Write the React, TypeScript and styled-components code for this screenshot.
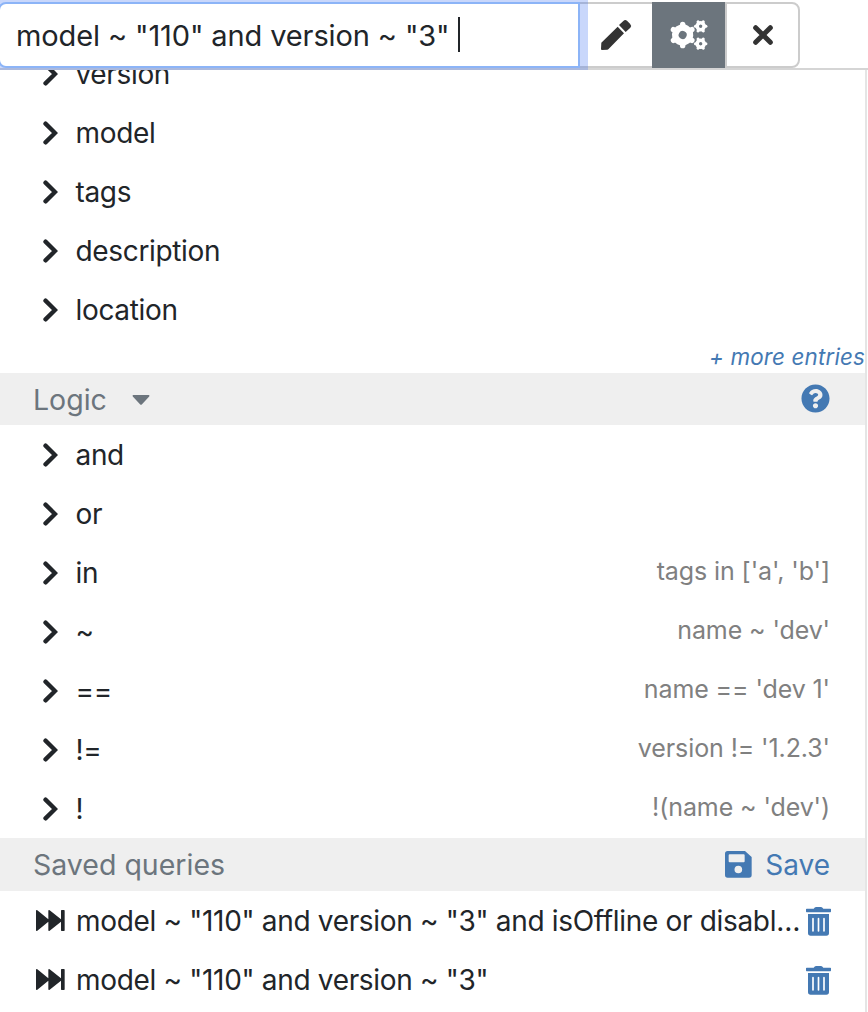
import React from "react";
import styled, { createGlobalStyle } from "styled-components";
import { FaQuestionCircle } from "react-icons/fa";

const GlobalStyle = createGlobalStyle`
  * { box-sizing: border-box; }
  body {
    margin: 0;
    background: #fff;
    color: #212529;
    font-family: Inter, "Liberation Sans", sans-serif;
    font-size: 28px;
    font-feature-settings: "calt" 0;
  }
  svg { display: block; flex: none; }
`;

const Page = styled.main`
  width: 868px;
  height: 1012px;
  overflow: hidden;
  display: flex;
  flex-direction: column;
`;

const Toolbar = styled.header`
  flex: none;
  height: 70px;
  padding-top: 2px;
  display: flex;
  align-items: flex-start;
  border-bottom: 2px solid #d5d5d5;
`;

const QueryField = styled.div`
  position: relative;
  z-index: 1;
  width: 582px;
  height: 66px;
  margin-left: -2px;
  padding: 1px 0 0 16px;
  display: flex;
  align-items: center;
  white-space: pre;
  font-size: 29px;
  letter-spacing: -0.12px;
  background: #fff;
  border: 2px solid #8cb4f7;
  border-radius: 8px 0 0 8px;
  box-shadow: 0 0 0 8px rgba(77, 124, 243, 0.3);
`;

const Caret = styled.span`
  width: 2px;
  height: 35px;
  margin-bottom: 2px;
  background: #212529;
`;

const ToolButton = styled.button<{ $width: number; $active?: boolean; $last?: boolean }>`
  width: ${(p) => p.$width}px;
  height: 66px;
  padding: 0;
  display: flex;
  align-items: center;
  justify-content: center;
  color: ${(p) => (p.$active ? "#fff" : "#333")};
  background: ${(p) => (p.$active ? "#6c757d" : "#fff")};
  border: 2px solid ${(p) => (p.$active ? "#6c757d" : "#ccc")};
  border-left-width: ${(p) => (p.$last ? 2 : 0)}px;
  border-right-width: ${(p) => (p.$last ? 2 : 0)}px;
  border-radius: ${(p) => (p.$last ? "0 8px 8px 0" : "0")};
`;

const Panel = styled.section`
  position: relative;
  z-index: 2;
  width: 867px;
  flex: 1;
  min-height: 0;
  overflow: hidden;
  background: #fff;
  border-right: 2px solid #e5e5e5;
`;

const ScrolledList = styled.div`
  margin-top: -26px;
`;

const Row = styled.div`
  height: 59px;
  padding: 0 35px 0 43px;
  display: flex;
  align-items: center;
`;

const Label = styled.span`
  margin-left: 17.500px;
  line-height: 34px;
  letter-spacing: -0.34px;
`;

const Hint = styled.span`
  margin-left: auto;
  padding-bottom: 3px;
  color: #808080;
  font-size: 25px;
  line-height: 30px;
  letter-spacing: -0.1px;
`;

const MoreEntries = styled.a`
  display: block;
  height: 34px;
  color: #4479b3;
  font-size: 22.4px;
  font-style: italic;
  line-height: 35px;
  letter-spacing: 0.15px;
  text-align: right;
`;

const SectionHeader = styled.div<{ $height: number }>`
  height: ${(p) => p.$height}px;
  padding: 0 35px 0 33px;
  display: flex;
  align-items: center;
  justify-content: space-between;
  color: #6c757d;
  background: #efefef;
`;

const Title = styled.span`
  display: flex;
  align-items: center;
  gap: 25px;
  font-size: 28.500px;

  svg { margin-top: 2px; }
`;

const SaveLink = styled.a`
  display: flex;
  align-items: center;
  gap: 13px;
  color: #4479b3;
`;

const HelpIcon = styled(FaQuestionCircle)`
  margin-bottom: 1px;
  color: #4479b3;
`;

const SavedRow = styled.div`
  height: 59px;
  padding: 0 34px 0 36px;
  display: flex;
  align-items: center;
`;

const SavedText = styled.span`
  width: 725px;
  margin: 0 5px 0 11px;
  padding-top: 1px;
  overflow: hidden;
  white-space: nowrap;
  text-overflow: ellipsis;
  letter-spacing: -0.32px;
`;

const Chevron = () => (
  <svg width="15" height="24" viewBox="0 0 45 72">
    <path d="M7.500 8L36 36L7.500 64" fill="none" stroke="currentColor" strokeWidth="13" strokeLinecap="round" />
  </svg>
);

const Pencil = () => (
  <svg width="32" height="32" viewBox="0 0 96 96" fill="currentColor">
    <path d="M4 71L53 23L72 43L25 91Q24 92 22 92L6 93Q3 93 3 90Z" />
    <path d="M57 18L70 6Q75 1 81 5L90 14Q96 20 91 26L77 39Z" />
  </svg>
);

type GearProps = { x: number; y: number; r: number; ring: number; tooth: number; turn: number };

const Gear = ({ x, y, r, ring, tooth, turn }: GearProps) => (
  <g transform={`translate(${x} ${y}) rotate(${turn})`} fill="none" stroke="currentColor">
    <circle r={r} strokeWidth={ring} />
    {[0, 60, 120, 180, 240, 300].map((a) => (
      <path
        key={a}
        d={`M${r} 0H${r + ring / 2}`}
        transform={`rotate(${a})`}
        strokeWidth={tooth}
        strokeLinecap="round"
      />
    ))}
  </g>
);

const Gears = () => (
  <svg width="38" height="32" viewBox="0 0 114 96">
    <Gear x={38} y={48} r={22} ring={20} tooth={16} turn={30} />
    <Gear x={92} y={22} r={10.500} ring={10.500} tooth={9} turn={0} />
    <Gear x={92} y={74} r={10.500} ring={10.500} tooth={9} turn={0} />
  </svg>
);

const Cross = () => (
  <svg width="22" height="22" viewBox="0 0 66 66">
    <path d="M11 11L55 55M55 11L11 55" stroke="currentColor" strokeWidth="15" strokeLinecap="round" />
  </svg>
);

const DownArrow = () => (
  <svg width="18" height="10" viewBox="0 0 54 30" fill="currentColor">
    <path d="M4 0H50Q54 1 51 5L30 28Q27 31 24 28L3 5Q0 1 4 0Z" />
  </svg>
);

const Disk = () => (
  <svg width="27" height="27" viewBox="0 0 81 81" fill="currentColor">
    <path
      fillRule="evenodd"
      d="M8 0H60L80 18V72Q80 80 72 80H8Q0 80 0 72V8Q0 0 8 0ZM14 10Q11 10 11 13V31Q11 34 14 34H56Q59 34 59 31V13Q59 10 56 10ZM40 44A11.500 11.500 0 1 0 40 67A11.500 11.500 0 1 0 40 44Z"
    />
  </svg>
);

const TrashSvg = styled.svg`
  margin-top: 1px;
  color: #4479b3;
`;

const Trash = () => (
  <TrashSvg width="25" height="29" viewBox="0 0 75 87">
    <path d="M2 5H23Q26 0 30 0H45Q49 0 52 5H73Q75 5 75 7V13Q75 16 73 16H2Q0 16 0 13V7Q0 5 2 5Z" fill="currentColor" />
    <path d="M6 21H69V78Q69 86 61 86H14Q6 86 6 78Z" fill="currentColor" />
    <path d="M21 35V72M37.500 35V72M54 35V72" stroke="#fff" strokeWidth="5" strokeLinecap="round" />
  </TrashSvg>
);

const FastForward = () => (
  <svg width="29" height="21" viewBox="0 0 87 63" fill="currentColor">
    <path d="M0 3Q0 -1 4 1L37 28V3Q37 -1 41 1L75 28V2Q75 0 77 0H84Q86 0 86 2V61Q86 63 84 63H77Q75 63 75 61V35L41 62Q37 64 37 60V35L4 62Q0 64 0 60Z" />
  </svg>
);

const properties = ["version", "model", "tags", "description", "location"];

const operators = [
  { name: "and" },
  { name: "or" },
  { name: "in", hint: "tags in ['a', 'b']" },
  { name: "~", hint: "name ~ 'dev'" },
  { name: "==", hint: "name == 'dev 1'" },
  { name: "!=", hint: "version != '1.2.3'" },
  { name: "!", hint: "!(name ~ 'dev')" },
];

const savedQueries = [
  'model ~ "110" and version ~ "3" and isOffline or disabled == true',
  'model ~ "110" and version ~ "3"',
];

export default function App() {
  return (
    <Page>
      <GlobalStyle />
      <Toolbar>
        <QueryField>
          {'model ~ "110" and version ~ "3" '}
          <Caret />
        </QueryField>
        <ToolButton $width={72}>
          <Pencil />
        </ToolButton>
        <ToolButton $width={73} $active>
          <Gears />
        </ToolButton>
        <ToolButton $width={75} $last>
          <Cross />
        </ToolButton>
      </Toolbar>
      <Panel>
        <ScrolledList>
          {properties.map((name) => (
            <Row key={name}>
              <Chevron />
              <Label>{name}</Label>
            </Row>
          ))}
          <MoreEntries>+ more entries</MoreEntries>
          <SectionHeader $height={52}>
            <Title>
              Logic
              <DownArrow />
            </Title>
            <HelpIcon size={29} />
          </SectionHeader>
          {operators.map(({ name, hint }) => (
            <Row key={name}>
              <Chevron />
              <Label>{name}</Label>
              {hint && <Hint>{hint}</Hint>}
            </Row>
          ))}
          <SectionHeader $height={53}>
            <Title>Saved queries</Title>
            <SaveLink>
              <Disk />
              Save
            </SaveLink>
          </SectionHeader>
          {savedQueries.map((query) => (
            <SavedRow key={query}>
              <FastForward />
              <SavedText>{query}</SavedText>
              <Trash />
            </SavedRow>
          ))}
        </ScrolledList>
      </Panel>
    </Page>
  );
}
